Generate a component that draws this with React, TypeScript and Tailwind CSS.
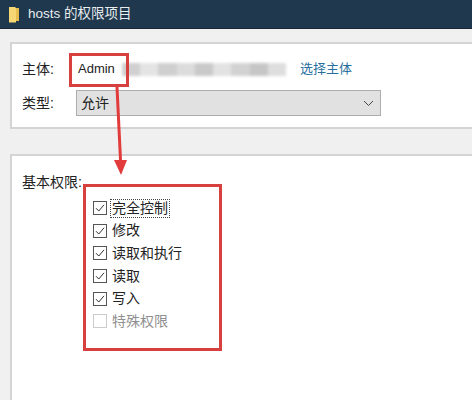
import React from 'react';

const font = { fontFamily: '"Liberation Sans", "Noto Sans CJK SC", sans-serif' };

const perms = [
  { label: "完全控制", checked: true, focus: true },
  { label: "修改", checked: true },
  { label: "读取和执行", checked: true },
  { label: "读取", checked: true },
  { label: "写入", checked: true },
  { label: "特殊权限", checked: false },
];

const smudges = ["bg-[#d0d0d0]", "bg-[#e4e4e4]", "bg-[#cfcfcf]", "bg-[#dcdcdc]", "bg-[#c9c9c9]", "bg-[#e2e2e2]", "bg-[#d2d2d2]", "bg-[#c6c6c6]", "bg-[#dedede]"];

const Check = ({ checked }: { checked: boolean }) => (
  <span className={`w-[14px] h-[14px] shrink-0 border flex items-center justify-center bg-white ${checked ? "border-[#555]" : "border-[#ccc]"}`}>
    {checked && (
      <svg width="10" height="10" viewBox="0 0 10 10" fill="none">
        <path d="M1 5.2 L3.8 8 L9 1.8" stroke="#333" strokeWidth="1" />
      </svg>
    )}
  </span>
);

export default function App() {
  return (
    <div className="relative w-[472px] h-[400px] overflow-hidden bg-[#f0f0f0] text-[#222] text-[14px]" style={font}>
      {/* title bar */}
      <div className="h-[29px] bg-[#1f384e] border-b border-[#16283a] flex items-center pl-[8px] gap-[8px] text-[#e8edf0] text-[13.5px]">
        <svg width="12" height="17" viewBox="0 0 12 17">
          <path d="M1 1 H7 L8 2 H11 V15 H8 V16.5 H1 Z" fill="#f6d774" />
          <path d="M8 2 H11 V15 H8 Z" fill="#e8bd50" />
        </svg>
        <span>hosts 的权限项目</span>
      </div>

      <div className="pt-[13px] pl-[10px]">
        {/* owner panel */}
        <div className="h-[87px] bg-white border-t-2 border-l-2 border-b-2 border-[#d4d4d4] pl-[10px] pt-[13px]">
          <div className="flex items-center h-[24px]">
            <span className="w-[56px]">主体:</span>
            <span className="w-[222px] text-[13px]">Admin</span>
            <span className="text-[#2a6f9e] text-[13px]">选择主体</span>
          </div>
          <div className="flex items-center h-[26px] mt-[9px]">
            <span className="w-[54px]">类型:</span>
            <div className="w-[305px] h-[26px] bg-[#e1e1e1] border border-[#adadad] flex items-center justify-between pl-[4px] pr-[6px]">
              <span>允许</span>
              <svg width="11" height="7" viewBox="0 0 11 7" fill="none">
                <path d="M1 1 L5.5 5.5 L10 1" stroke="#444" strokeWidth="1" />
              </svg>
            </div>
          </div>
        </div>

        {/* permissions panel */}
        <div className="mt-[25px] h-[250px] bg-white border-t-2 border-l-2 border-[#d4d4d4] pl-[10px] pt-[16px]">
          <div className="h-[20px] leading-[20px]">基本权限:</div>
          <div className="ml-[71px] mt-[5px] flex flex-col">
            {perms.map((p) => (
              <div key={p.label} className="flex items-center h-[22.6px] gap-[3px]">
                <Check checked={p.checked} />
                <span className={`px-px leading-[17px] ${p.focus ? "border border-dotted border-[#444]" : "border border-transparent"} ${p.checked ? "" : "text-[#8f8f8f]"}`}>
                  {p.label}
                </span>
              </div>
            ))}
          </div>
        </div>
      </div>

      {/* blurred out account name */}
      <div className="absolute left-[122px] top-[63px] w-[164px] h-[13px] flex blur-[1.5px]">
        {smudges.map((c, i) => (
          <div key={i} className={`flex-1 ${c}`} />
        ))}
      </div>

      {/* red annotations */}
      <div className="absolute left-[69px] top-[53px] w-[60px] h-[34px] border-[3px] border-[#d6403f]" />
      <div className="absolute left-[83px] top-[184px] w-[139px] h-[167px] border-[3px] border-[#d6403f]" />
      <svg className="absolute left-[110px] top-[87px]" width="20" height="90" viewBox="0 0 20 90">
        <path d="M5.5 0 L8.5 0 L12 73 L17 73 L11 88 L4 73 L9 73 Z" fill="#e23b3b" />
      </svg>
    </div>
  );
}
